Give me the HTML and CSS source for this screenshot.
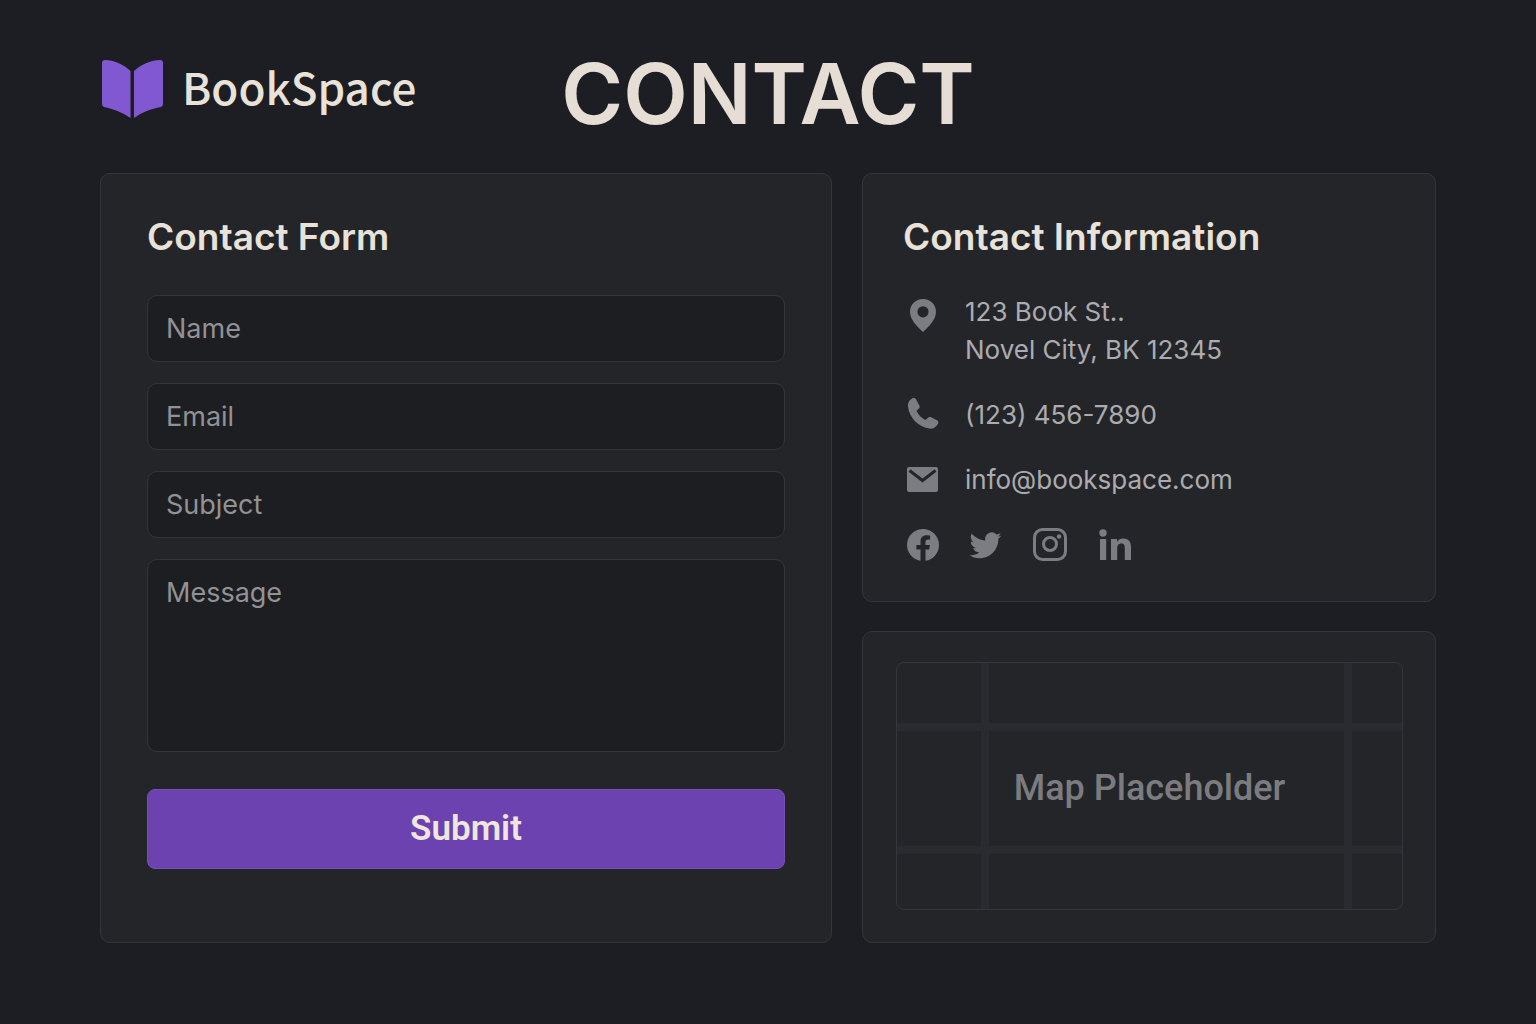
FILE: index.html
```html
<!DOCTYPE html>
<html lang="en">
<head>
<meta charset="utf-8">
<meta name="viewport" content="width=device-width, initial-scale=1">
<title>Contact – BookSpace</title>
<link rel="stylesheet" href="styles.css">
</head>
<body>
<div class="page">
  <header class="header">
    <a class="brand" href="#">
      <svg class="brand-mark" viewBox="0 0 62 60" aria-hidden="true">
        <path d="M4 1C13 1 22 5 29.500 12V59C21 53 12 50 3 48Q1 47 1 45V4Q1 1 4 1Z"/>
        <path d="M59 1C50 1 41 5 33 12V59C41 53 50 50 60 48Q62 47 62 45V4Q62 1 59 1Z"/>
      </svg>
      <span class="brand-name">BookSpace</span>
    </a>
    <h1 class="title">CONTACT</h1>
  </header>

  <main class="layout">
    <section class="card form-card">
      <h2 class="heading">Contact Form</h2>
      <form class="form">
        <input class="field" type="text" name="name" placeholder="Name" aria-label="Name">
        <input class="field" type="email" name="email" placeholder="Email" aria-label="Email">
        <input class="field" type="text" name="subject" placeholder="Subject" aria-label="Subject">
        <textarea class="field message" name="message" placeholder="Message" aria-label="Message"></textarea>
        <button class="submit" type="submit">Submit</button>
      </form>
    </section>

    <div class="side">
      <section class="card info-card">
        <h2 class="heading">Contact Information</h2>
        <ul class="info">
          <li class="info-row">
            <svg class="icon" viewBox="0 0 32 38" aria-hidden="true"><path fill-rule="evenodd" d="M16 6C8.500 6 3 11.600 3 18.700C3 27 10.500 33.500 16 39C21.500 33.500 29 27 29 18.700C29 11.600 23.500 6 16 6ZM16 13.200A5.600 5.600 0 1 1 16 24.400A5.600 5.600 0 1 1 16 13.200Z"/></svg>
            <address class="address">123 Book St..<br>Novel City, BK 12345</address>
          </li>
          <li class="info-row">
            <svg class="icon" viewBox="0 0 32 38" aria-hidden="true"><path d="M5.500 2.300C7 1.500 8.300 2 9 3.300L12.300 9.400C13 10.700 12.700 11.900 11.700 12.800L9.500 14.800C11.500 19 14.300 21.900 18.500 24L20.700 21.900C21.700 20.900 22.900 20.700 24.100 21.300L30 24.300C31.500 25.100 31.800 26.600 30.900 28C29 31.300 25.700 33.200 22.200 32.600C10.500 30.500 2.500 21.500 1 10.800C0.500 7.300 2.300 4 5.500 2.300Z"/></svg>
            <span>(123) 456-7890</span>
          </li>
          <li class="info-row">
            <svg class="icon" viewBox="0 0 32 38" aria-hidden="true"><rect x="0" y="6" width="31" height="25" rx="2"/><path class="flap" d="M2.500 9.500L15.500 19.500L28.500 9.500"/></svg>
            <span>info@bookspace.com</span>
          </li>
        </ul>
        <nav class="social" aria-label="Social media">
          <a class="social-link" href="#" aria-label="Facebook"><svg class="icon" viewBox="0 0 32 38"><path d="M32 20A16 16 0 1 0 13.500 35.800V24.600H9.400V20H13.500V16.400C13.500 12.400 15.900 10.200 19.500 10.200C21.300 10.200 23.100 10.500 23.100 10.500V14.400H21.100C19.100 14.400 18.500 15.600 18.500 16.900V20H22.900L22.200 24.600H18.500V35.800A16 16 0 0 0 32 20Z"/></svg></a>
          <a class="social-link" href="#" aria-label="Twitter"><svg class="icon" viewBox="1 0 32 38"><path d="M31.500 10.500C30.300 11 29.100 11.400 27.900 11.500C29.200 10.700 30.100 9.500 30.600 8C29.300 8.700 27.900 9.200 26.500 9.500A6.600 6.600 0 0 0 15.300 15.500C9.800 15.200 5 12.600 1.700 8.600C0 11.500.8 15.300 3.700 17.400C2.700 17.300 1.700 17.100 .8 16.600C.8 19.600 2.900 22.300 6 23C5.100 23.300 4 23.300 3.100 23.100C3.900 25.700 6.300 27.500 9.200 27.600C6.400 29.700 2.900 30.700-.6 30.300C2.300 32.200 5.800 33.200 9.500 33.200C21.700 33.200 28.700 22.900 28.300 13.700C29.500 12.800 30.600 11.800 31.500 10.500Z"/></svg></a>
          <a class="social-link" href="#" aria-label="Instagram"><svg class="icon" viewBox="0 0 32 38"><rect class="line" x="-0.500" y="4.500" width="31" height="30" rx="8"/><circle class="line" cx="15" cy="19" r="6.500"/><circle cx="24" cy="11.500" r="2.200"/></svg></a>
          <a class="social-link" href="#" aria-label="LinkedIn"><svg class="icon" viewBox="0 0 32 38"><circle cx="4" cy="8" r="3.700"/><path d="M1 14H7.200V35H1ZM12 14H18V16.800C19.200 14.700 21.500 13.500 24.300 13.500C30.200 13.500 32 17.200 32 22.400V35H25.800V23.700C25.800 21 25.500 18.600 22.400 18.600C19.200 18.600 18.200 20.700 18.200 23.700V35H12Z"/></svg></a>
        </nav>
      </section>

      <section class="card map-card">
        <div class="map"><span class="map-label">Map Placeholder</span></div>
      </section>
    </div>
  </main>
</div>
</body>
</html>
```
FILE: styles.css
```css
* {
  box-sizing: border-box;
}

body {
  margin: 0;
  min-height: 100vh;
  background: #1d1e23;
  color: #e8e2d9;
  font-family: Inter, "Liberation Sans", sans-serif;
}

.page {
  padding: 40px 100px 80px;
}

.header {
  display: grid;
  grid-template-columns: 1fr auto 1fr;
  align-items: center;
  margin-bottom: 35px;
}

.brand {
  display: flex;
  align-items: flex-start;
  gap: 18px;
  color: inherit;
  text-decoration: none;
}

.brand-mark {
  width: 64px;
  height: 60px;
  fill: #8257d2;
}

.brand-name {
  font: 500 44px/54px "Noto Sans CJK JP", sans-serif;
}

.title {
  margin: 0;
  padding-top: 10px;
  color: #e6ddd4;
  font-size: 84px;
  font-weight: 600;
  line-height: 88px;
}

.layout {
  display: grid;
  grid-template-columns: 732fr 574fr;
  gap: 30px;
}

.side {
  display: grid;
  gap: 29px;
  grid-template-rows: auto 1fr;
}

.card {
  border: 1px solid #35363b;
  border-radius: 10px;
  background: #242529;
}

.form-card {
  padding: 39px 46px 73px;
}

.info-card {
  padding: 39px 40px 38px;
}

.map-card {
  display: grid;
  padding: 30px 32px 32px 33px;
}

.heading {
  margin: 0;
  font-size: 37px;
  font-weight: 600;
  line-height: 48px;
}

.form {
  display: grid;
  gap: 21px;
  margin-top: 34px;
}

.field {
  width: 100%;
  height: 67px;
  padding: 0 18px;
  border: 1px solid #35363b;
  border-radius: 10px;
  background: #1d1e22;
  color: #e9e4dc;
  font: 400 27px/38px Inter, sans-serif;
}

.field::placeholder {
  color: #929296;
  opacity: 1;
}

.message {
  display: block;
  height: 193px;
  padding: 14px 18px;
  resize: none;
}

.submit {
  height: 80px;
  margin-top: 16px;
  border: 1px solid #7650b8;
  border-radius: 8px;
  background: #6b42b0;
  color: #efe6dc;
  font: 600 35px/48px Roboto, sans-serif;
}

.info {
  display: grid;
  gap: 27px;
  margin: 32px 0 26px;
  padding: 0;
  list-style: none;
}

.info-row {
  display: flex;
  gap: 26px;
  padding-left: 4px;
  color: #acacb0;
  font-size: 26px;
  line-height: 38px;
}

.address {
  font-style: normal;
}

.icon {
  display: block;
  flex: none;
  width: 32px;
  height: 38px;
  overflow: visible;
  fill: #7c7d82;
}

.flap {
  fill: none;
  stroke: #242529;
  stroke-width: 3;
}

.line {
  fill: none;
  stroke: #7c7d82;
  stroke-width: 3;
}

.social {
  display: flex;
  gap: 32px;
  padding-left: 4px;
}

.map {
  display: grid;
  place-items: center;
  min-height: 248px;
  padding-top: 4px;
  border: 1px solid #35363b;
  border-radius: 8px;
  background:
    linear-gradient(#2a2b30, #2a2b30) 0 25% / 100% 8px no-repeat,
    linear-gradient(#2a2b30, #2a2b30) 0 77% / 100% 8px no-repeat,
    linear-gradient(#2a2b30, #2a2b30) 17% 0 / 8px 100% no-repeat,
    linear-gradient(#2a2b30, #2a2b30) 90% 0 / 8px 100% no-repeat;
}

.map-label {
  color: #7c7c80;
  font: 500 36px/48px Roboto, sans-serif;
}
```
